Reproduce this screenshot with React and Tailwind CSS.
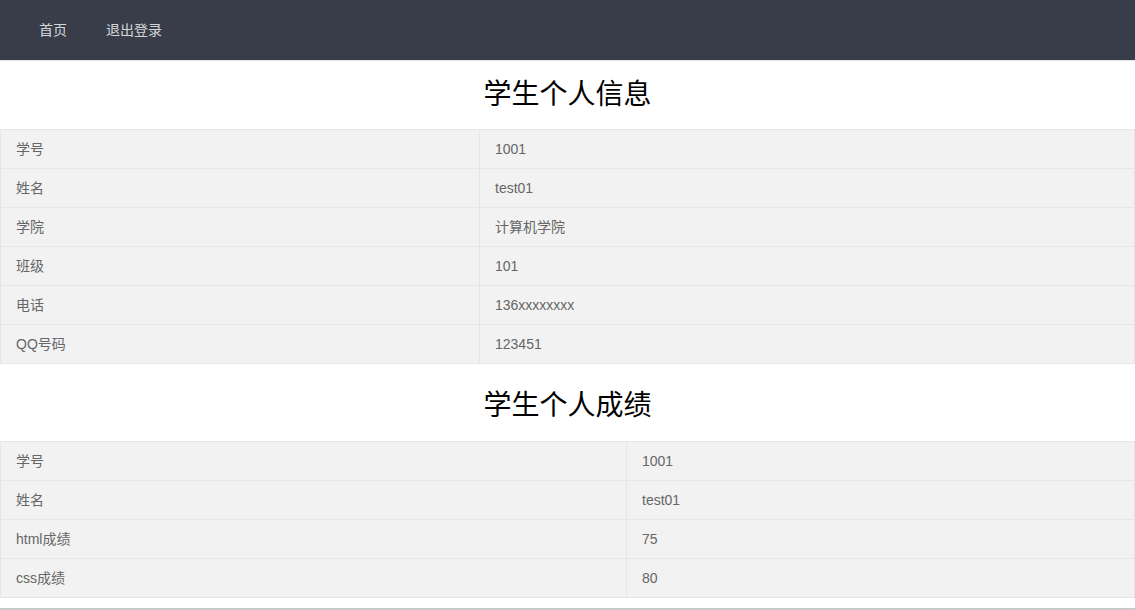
import React from "react";

const font = { fontFamily: '"Liberation Sans", "Noto Sans CJK SC", sans-serif' };

function Table({ rows, split }) {
  return (
    <table className="w-full border-collapse" style={font}>
      <tbody>
        {rows.map(([k, v]) => (
          <tr key={k} className="bg-[#f2f2f2]">
            <td className={`${split} border border-[#e6e6e6] px-[15px] py-[9px] text-[14px] leading-5 text-[#666]`}>{k}</td>
            <td className="border border-[#e6e6e6] px-[15px] py-[9px] text-[14px] leading-5 text-[#666]">{v}</td>
          </tr>
        ))}
      </tbody>
    </table>
  );
}

export default function App() {
  const info = [
    ["学号", "1001"],
    ["姓名", "test01"],
    ["学院", "计算机学院"],
    ["班级", "101"],
    ["电话", "136xxxxxxxx"],
    ["QQ号码", "123451"],
  ];
  const score = [
    ["学号", "1001"],
    ["姓名", "test01"],
    ["html成绩", "75"],
    ["css成绩", "80"],
  ];
  return (
    <div className="w-[1135px] bg-white" style={font}>
      <div className="h-[61px] bg-[#393d49] flex items-center px-[20px] pt-[1px] border-b border-[#e2e2e2]">
        <span className="px-[19px] text-[14px] text-[rgba(255,255,255,0.8)]">首页</span>
        <span className="px-[20px] text-[14px] text-[rgba(255,255,255,0.8)]">退出登录</span>
      </div>
      <div className="h-[68px] flex items-center justify-center pb-[6px]">
        <h2 className="text-[28px] leading-none text-black" style={{ fontFamily: '"Noto Sans CJK SC", sans-serif' }}>学生个人信息</h2>
      </div>
      <Table rows={info} split="w-[479px]" />
      <div className="h-[77px] flex items-center justify-center">
        <h2 className="text-[28px] leading-none text-black" style={{ fontFamily: '"Noto Sans CJK SC", sans-serif' }}>学生个人成绩</h2>
      </div>
      <Table rows={score} split="w-[626px]" />
      <div className="mt-[10px] border-t-2 border-[#c9c9c9]"></div>
    </div>
  );
}
